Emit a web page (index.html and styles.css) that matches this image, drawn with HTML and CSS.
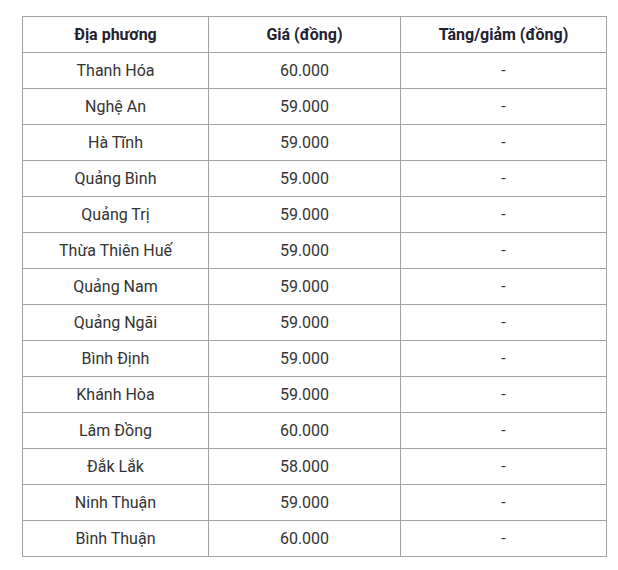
FILE: index.html
```html
<!DOCTYPE html>
<html lang="vi">
<head>
<meta charset="utf-8">
<link rel="stylesheet" href="styles.css">
</head>
<body>
<div class="wrap">
<table class="price">
<colgroup><col class="c1"><col class="c2"><col class="c3"></colgroup>
<thead>
<tr><th>Địa phương</th><th>Giá (đồng)</th><th>Tăng/giảm (đồng)</th></tr>
</thead>
<tbody>
<tr><td>Thanh Hóa</td><td>60.000</td><td>-</td></tr>
<tr><td>Nghệ An</td><td>59.000</td><td>-</td></tr>
<tr><td>Hà Tĩnh</td><td>59.000</td><td>-</td></tr>
<tr><td>Quảng Bình</td><td>59.000</td><td>-</td></tr>
<tr><td>Quảng Trị</td><td>59.000</td><td>-</td></tr>
<tr><td>Thừa Thiên Huế</td><td>59.000</td><td>-</td></tr>
<tr><td>Quảng Nam</td><td>59.000</td><td>-</td></tr>
<tr><td>Quảng Ngãi</td><td>59.000</td><td>-</td></tr>
<tr><td>Bình Định</td><td>59.000</td><td>-</td></tr>
<tr><td>Khánh Hòa</td><td>59.000</td><td>-</td></tr>
<tr><td>Lâm Đồng</td><td>60.000</td><td>-</td></tr>
<tr><td>Đắk Lắk</td><td>58.000</td><td>-</td></tr>
<tr><td>Ninh Thuận</td><td>59.000</td><td>-</td></tr>
<tr><td>Bình Thuận</td><td>60.000</td><td>-</td></tr>
</tbody>
</table>
</div>
</body>
</html>
```
FILE: styles.css
```css
html, body {
  margin: 0;
  padding: 0;
  background: #ffffff;
}
.wrap {
  padding: 16px 0 0 22px;
}
.price {
  border-collapse: collapse;
  table-layout: fixed;
  width: 584px;
  font-family: Roboto, "Liberation Sans", sans-serif;
  font-size: 16px;
  color: #333333;
}
.c1 { width: 186px; }
.c2 { width: 192px; }
.c3 { width: 206px; }
.price th, .price td {
  border: 1px solid #a3a1a6;
  height: 35px;
  padding: 0 4px;
  text-align: center;
  vertical-align: middle;
  box-sizing: border-box;
}
.price tr { height: 36px; }
.price th {
  font-weight: 700;
  color: #1f2130;
}
```
